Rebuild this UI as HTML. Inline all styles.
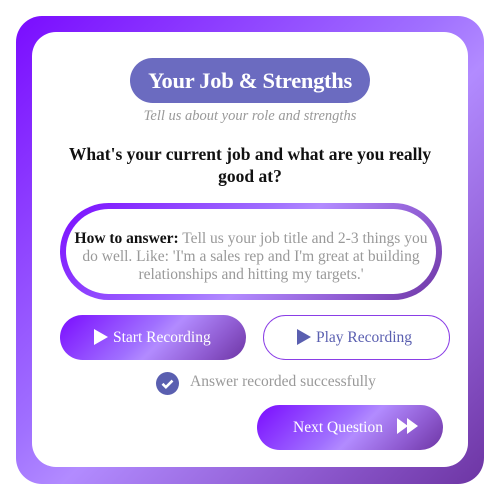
<!DOCTYPE html>
<html><head><style>
*{margin:0;padding:0;box-sizing:border-box}
body{width:500px;height:500px;background:#fff;position:relative;font-family:"Liberation Serif",serif;overflow:hidden}
.g{background:linear-gradient(135deg,#7a0cff 0%,#a070ff 45%,#b28bff 55%,#8e5ad0 80%,#6d35a3 100%)}
.outer{position:absolute;left:16px;top:16px;width:468px;height:468px;border-radius:26px}
.inner{position:absolute;left:32px;top:32px;width:436px;height:435px;border-radius:24px;background:#fff}
.title{position:absolute;left:130px;top:58px;width:240px;height:45px;border-radius:23px;background:#6b6bc0;color:#fff;font-weight:bold;font-size:22.5px;text-align:center;line-height:45px;letter-spacing:-0.3px}
.sub{position:absolute;left:0;width:500px;top:108px;text-align:center;font-style:italic;color:#999;font-size:14.5px}
.q{position:absolute;left:65px;width:370px;top:143px;text-align:center;font-weight:bold;font-size:17.5px;line-height:22px;color:#111}
.hintb{position:absolute;left:60px;top:203px;width:382px;height:97px;border-radius:49px;padding:6px}
.hint{width:100%;height:100%;background:#fff;border-radius:44px;text-align:center;font-size:15.5px;line-height:18px;color:#999;padding:21px 5px 0}
.hint b{color:#111}
.btn{position:absolute;height:45px;border-radius:23px;color:#fff;font-size:15.5px;line-height:45px}
.tri{display:inline-block;width:0;height:0;border-top:8px solid transparent;border-bottom:8px solid transparent;border-left:14px solid #fff;vertical-align:-3px;margin-right:5px}
</style></head><body>
<div class="outer g"></div>
<div class="inner"></div>
<div class="title">Your Job &amp; Strengths</div>
<div class="sub">Tell us about your role and strengths</div>
<div class="q">What's your current job and what are you really good at?</div>
<div class="hintb g"><div class="hint"><b>How to answer:</b> Tell us your job title and 2-3 things you do well. Like: 'I'm a sales rep and I'm great at building relationships and hitting my targets.'</div></div>
<div class="btn g" style="left:60px;top:315px;width:186px;padding-left:34px"><span class="tri"></span>Start Recording</div>
<div class="btn" style="left:263px;top:315px;width:187px;border:1px solid #8a3ee6;color:#5a5fb0;padding-left:33px;line-height:43px"><span class="tri" style="border-left-color:#5a5fb0"></span>Play Recording</div>
<svg style="position:absolute;left:156px;top:372px" width="23" height="23"><circle cx="11.5" cy="11.5" r="11.5" fill="#5a5fb0"/><path d="M6.5 11.8l3.4 3.4 6.6-6.6" stroke="#fff" stroke-width="2.6" fill="none"/></svg>
<div style="position:absolute;left:190px;top:373px;font-size:15.5px;color:#999">Answer recorded successfully</div>
<div class="btn g" style="left:257px;top:405px;width:186px;padding-left:36px">Next Question <svg width="22" height="16" style="vertical-align:-2px;margin-left:10px"><path d="M0 0L11 8L0 16Z M10 0L21 8L10 16Z" fill="#fff"/></svg></div>
</body></html>
